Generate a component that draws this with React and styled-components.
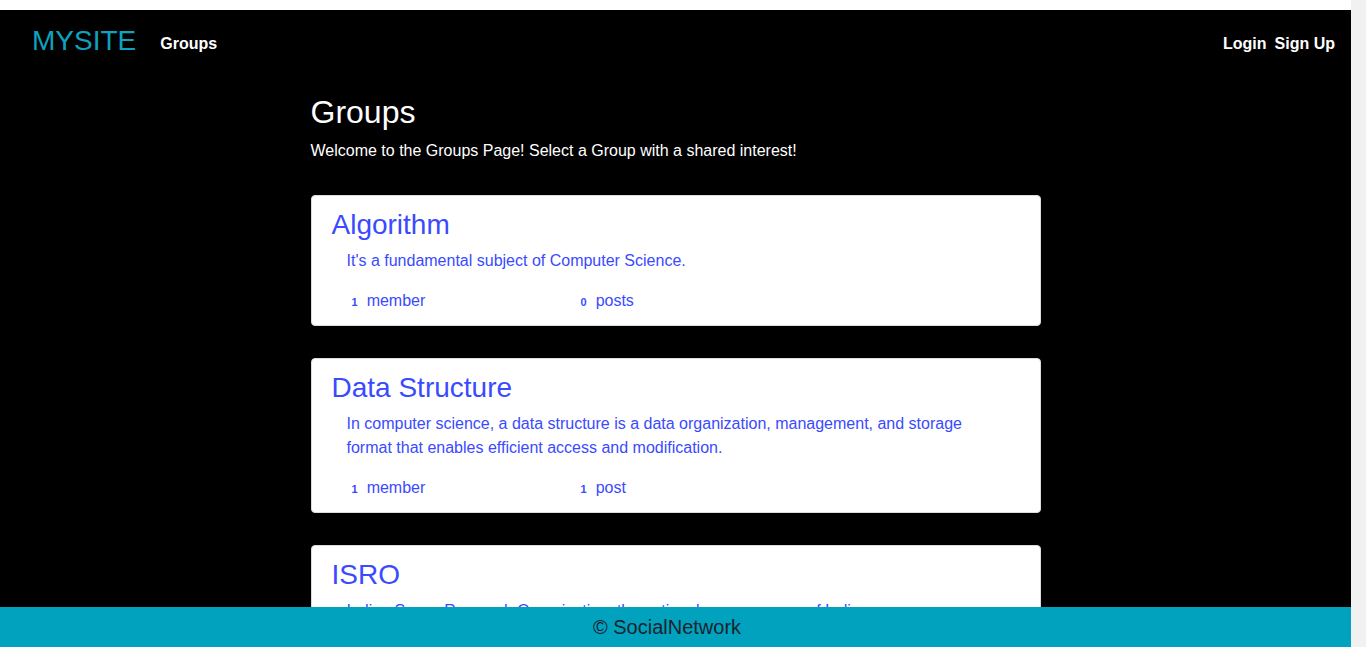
import React from "react";
import styled, { createGlobalStyle } from "styled-components";

const GlobalStyle = createGlobalStyle`
  html {
    background: #f1f1f1;
  }
  html, body {
    margin: 0;
    padding: 0;
    font-family: "Liberation Sans", Arial, sans-serif;
  }
  body {
    margin-right: 15px;
    background: #ffffff;
  }
  * { box-sizing: border-box; }
`;

const Page = styled.div`
  margin-top: 10px;
  background: #000000;
  color: #ffffff;
  min-height: 1218px;
  padding-bottom: 60px;
`;

const Nav = styled.nav`
  display: flex;
  align-items: center;
  height: 62px;
  padding: 0 16px 0 32px;
`;

const Brand = styled.a`
  font-size: 28px;
  color: #0ea2bf;
  text-decoration: none;
  margin-right: 24px;
  line-height: 1.2;
`;

const NavLinks = styled.div`
  display: flex;
  align-items: center;
  gap: ${(p) => p.$gap || 0}px;
  margin-left: ${(p) => (p.$right ? "auto" : "0")};
  padding-top: 6px;
`;

const NavLink = styled.a`
  color: #ffffff;
  font-weight: bold;
  font-size: 16px;
  text-decoration: none;
`;

const Main = styled.main`
  width: 730px;
  margin: 0 auto;
  padding-top: 21px;
`;

const Heading = styled.h1`
  font-size: 32px;
  font-weight: normal;
  line-height: 38px;
  margin: 0 0 8px;
`;

const Intro = styled.p`
  font-size: 16px;
  line-height: 24px;
  margin: 0 0 32px;
`;

const CardList = styled.div`
  display: flex;
  flex-direction: column;
  gap: 32px;
`;

const Card = styled.div`
  background: #ffffff;
  border: 1px solid #dcdcdc;
  border-radius: 4px;
  padding: 12px 21px 12px 20px;
  color: #3a4aff;
`;

const CardTitle = styled.h2`
  font-size: 28px;
  font-weight: normal;
  line-height: 34px;
  margin: 0 0 7px;
`;

const CardText = styled.p`
  font-size: 16px;
  line-height: 24px;
  margin: 0 0 16px 15px;
  padding-right: 15px;
`;

const Stats = styled.div`
  display: grid;
  grid-template-columns: 229px 229px;
  padding-left: 20px;
  font-size: 16px;
  line-height: 24px;
  height: 24px;
`;

const Stat = styled.div`
  display: flex;
  align-items: baseline;
  gap: 9px;
`;

const Count = styled.b`
  font-size: 11px;
  line-height: 1;
`;

const Footer = styled.footer`
  position: fixed;
  left: 0;
  right: 15px;
  bottom: 0;
  height: 40px;
  background: #00a2bd;
  color: #1c2230;
  font-size: 20px;
  display: flex;
  align-items: center;
  justify-content: center;
  padding-right: 17px;
`;

const groups = [
  {
    name: "Algorithm",
    desc: "It's a fundamental subject of Computer Science.",
    members: 1,
    posts: 0,
  },
  {
    name: "Data Structure",
    desc: "In computer science, a data structure is a data organization, management, and storage format that enables efficient access and modification.",
    members: 1,
    posts: 1,
  },
  {
    name: "ISRO",
    desc: "Indian Space Research Organisation, the national space agency of India.",
    members: 1,
    posts: 0,
  },
  {
    name: "Operating System",
    desc: "System software that manages computer hardware and software resources.",
    members: 1,
    posts: 0,
  },
  {
    name: "Web Development",
    desc: "Building and maintaining websites and web applications.",
    members: 1,
    posts: 0,
  },
];

export default function App() {
  return (
    <>
      <GlobalStyle />
      <Page>
        <Nav>
          <Brand href="#">MYSITE</Brand>
          <NavLinks>
            <NavLink href="#">Groups</NavLink>
          </NavLinks>
          <NavLinks $right $gap={8}>
            <NavLink href="#">Login</NavLink>
            <NavLink href="#">Sign Up</NavLink>
          </NavLinks>
        </Nav>
        <Main>
          <Heading>Groups</Heading>
          <Intro>Welcome to the Groups Page! Select a Group with a shared interest!</Intro>
          <CardList>
            {groups.map((g) => (
              <Card key={g.name}>
                <CardTitle>{g.name}</CardTitle>
                <CardText>{g.desc}</CardText>
                <Stats>
                  <Stat>
                    <Count>{g.members}</Count>
                    <span>{g.members === 1 ? "member" : "members"}</span>
                  </Stat>
                  <Stat>
                    <Count>{g.posts}</Count>
                    <span>{g.posts === 1 ? "post" : "posts"}</span>
                  </Stat>
                </Stats>
              </Card>
            ))}
          </CardList>
        </Main>
      </Page>
      <Footer>© SocialNetwork</Footer>
    </>
  );
}
